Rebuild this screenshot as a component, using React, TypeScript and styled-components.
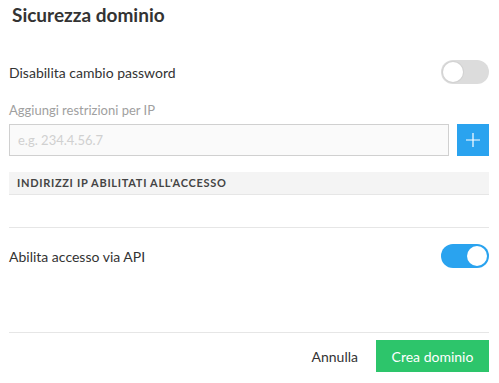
import React from "react";
import styled, { createGlobalStyle } from "styled-components";

const Global = createGlobalStyle`
  body{margin:0;background:#fff;font-family:Lato,"Noto Sans",sans-serif;color:#333;}
  *{box-sizing:border-box;}
`

const Panel = styled.div`
  width: 499px;
  height: 383px;
  padding: 0 10px 0 9px;
`
const Title = styled.h2`
  margin: 0;
  padding-left: 3px;
  font-size: 19px;
  font-weight: 700;
  line-height: 30px;
  color: #333;
`
const Row = styled.div<{ $top: number }>`
  display: flex;
  align-items: center;
  justify-content: space-between;
  height: 24px;
  margin-top: ${p => p.$top}px;
  font-size: 14px;
`
const Toggle = styled.span<{ $on?: boolean }>`
  position: relative;
  width: 48px;
  height: 24px;
  border-radius: 12px;
  background: ${p => (p.$on ? "#2aa3ef" : "#dcdcdc")};
  &::after{
    content: '';
    position: absolute;
    top: 2px;
    left: ${p => (p.$on ? "26px" : "2px")};
    width: 20px;
    height: 20px;
    border-radius: 50%;
    background: #fff;
    box-shadow: 0 0 0 1px ${p => (p.$on ? "#2aa3ef" : "#d2d2d2")};
  }
`
const FieldLabel = styled.div`
  margin-top: 16px;
  font-size: 13px;
  line-height: 20px;
  color: #a0a0a0;
`
const InputRow = styled.div`
  display: flex;
  gap: 8px;
  margin-top: 4px;
  >input{
    flex-grow: 1;
    height: 32px;
    border: 1px solid #d0d0d0;
    background: #fafafa;
    padding: 0 8px;
    font: 13px Lato,"Noto Sans",sans-serif;
    outline: none;
    &::placeholder{color:#d0d0d0;}
  }
`
const AddButton = styled.button`
  width: 32px;
  height: 32px;
  border: none;
  background: #2aa3ef;
  display: flex;
  align-items: center;
  justify-content: center;
  padding: 0;
`
const ListHeader = styled.div`
  margin-top: 16px;
  height: 23px;
  background: #f4f4f4;
  border-bottom: 1px solid #e6e6e6;
  padding-left: 8px;
  font-size: 11px;
  font-weight: 700;
  letter-spacing: 0.7px;
  line-height: 22px;
  color: #444;
`
const Divider = styled.hr<{ $top: number }>`
  margin: ${p => p.$top}px 0 0;
  border: none;
  border-top: 1px solid #e6e6e6;
  height: 0;
`
const Footer = styled.div`
  display: flex;
  justify-content: flex-end;
  align-items: center;
  gap: 18px;
  margin-top: 7px;
  >button{
    height: 32px;
    border: none;
    font: 14px Lato,"Noto Sans",sans-serif;
  }
`
const CancelButton = styled.button`
  background: none;
  color: #333;
  padding: 0;
`
const PrimaryButton = styled.button`
  background: #2dc56b;
  color: #fff;
  width: 113px;
  padding: 0;
`

export default function App() {
    return (
        <Panel>
            <Global/>
            <Title>Sicurezza dominio</Title>
            <Row $top={30}>
                <span>Disabilita cambio password</span>
                <Toggle/>
            </Row>
            <FieldLabel>Aggiungi restrizioni per IP</FieldLabel>
            <InputRow>
                <input type="text" placeholder="e.g. 234.4.56.7"/>
                <AddButton>
                    <svg width="16" height="16" viewBox="0 0 16 16">
                        <path d="M8 1v14M1 8h14" stroke="#fff" strokeWidth="1.2"/>
                    </svg>
                </AddButton>
            </InputRow>
            <ListHeader>INDIRIZZI IP ABILITATI ALL'ACCESSO</ListHeader>
            <Divider $top={32}/>
            <Row $top={16}>
                <span>Abilita accesso via API</span>
                <Toggle $on/>
            </Row>
            <Divider $top={64}/>
            <Footer>
                <CancelButton>Annulla</CancelButton>
                <PrimaryButton>Crea dominio</PrimaryButton>
            </Footer>
        </Panel>
    );
}
